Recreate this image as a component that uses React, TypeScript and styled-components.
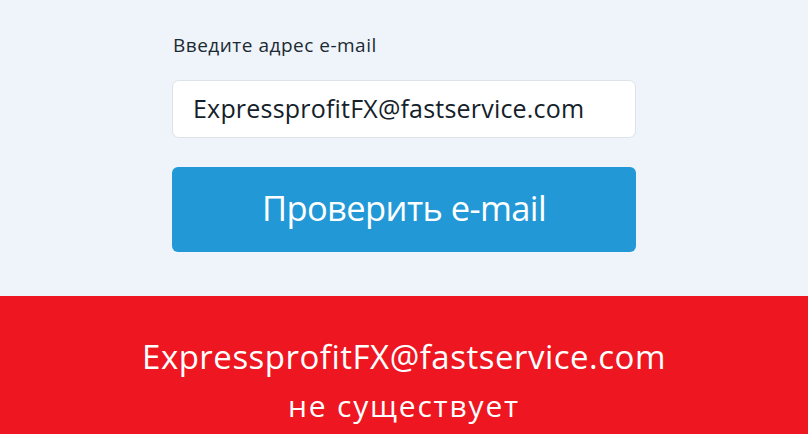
import React from "react";
import styled, { createGlobalStyle } from "styled-components";

const Global = createGlobalStyle`
  html, body { margin: 0; padding: 0; }
  body {
    background: #eef4fa;
    font-family: "Open Sans", "Noto Sans", sans-serif;
  }
`;

const Page = styled.div`
  width: 808px;
  height: 434px;
  display: flex;
  flex-direction: column;
  overflow: hidden;
`;

const Top = styled.section`
  height: 296px;
  box-sizing: border-box;
  background: #eef4fa;
  display: flex;
  justify-content: center;
  padding-top: 33px;
`;

const Form = styled.form`
  width: 464px;
  display: flex;
  flex-direction: column;
`;

const Label = styled.label`
  font-size: 19px;
  letter-spacing: 0.5px;
  color: #1c2a33;
  line-height: 24px;
  margin-left: 1px;
`;

const Input = styled.div`
  margin-top: 23px;
  height: 58px;
  box-sizing: border-box;
  background: #fff;
  border: 1px solid #dde3e8;
  border-radius: 7px;
  display: flex;
  align-items: center;
  padding-left: 20px;
  padding-bottom: 2px;
  font-size: 25px;
  letter-spacing: 0.2px;
  color: #14212a;
`;

const Button = styled.button`
  margin-top: 29px;
  height: 85px;
  border: none;
  border-radius: 6px;
  background: #2299d6;
  color: #fff;
  font-family: "Open Sans", "Noto Sans", sans-serif;
  font-size: 34.5px;
  letter-spacing: -0.6px;
  padding: 0;
  padding-bottom: 4px;
`;

const Alert = styled.section`
  flex: 1;
  background: #ee1620;
  color: #fff;
  display: flex;
  flex-direction: column;
  align-items: center;
  padding-top: 39px;
  box-sizing: border-box;
`;

const AlertLine = styled.div<{ $size: number; $lh: number; $ls: number }>`
  font-size: ${(p) => p.$size}px;
  line-height: ${(p) => p.$lh}px;
  letter-spacing: ${(p) => p.$ls}px;
  font-weight: 500;
`;

export default function App() {
  return (
    <Page>
      <Global />
      <Top>
        <Form onSubmit={(e) => e.preventDefault()}>
          <Label>Введите адрес e-mail</Label>
          <Input>ExpressprofitFX@fastservice.com</Input>
          <Button type="submit">Проверить e-mail</Button>
        </Form>
      </Top>
      <Alert>
        <AlertLine $size={33} $lh={44} $ls={0.5}>
          ExpressprofitFX@fastservice.com
        </AlertLine>
        <AlertLine $size={30} $lh={53} $ls={1.8}>
          не существует
        </AlertLine>
      </Alert>
    </Page>
  );
}
